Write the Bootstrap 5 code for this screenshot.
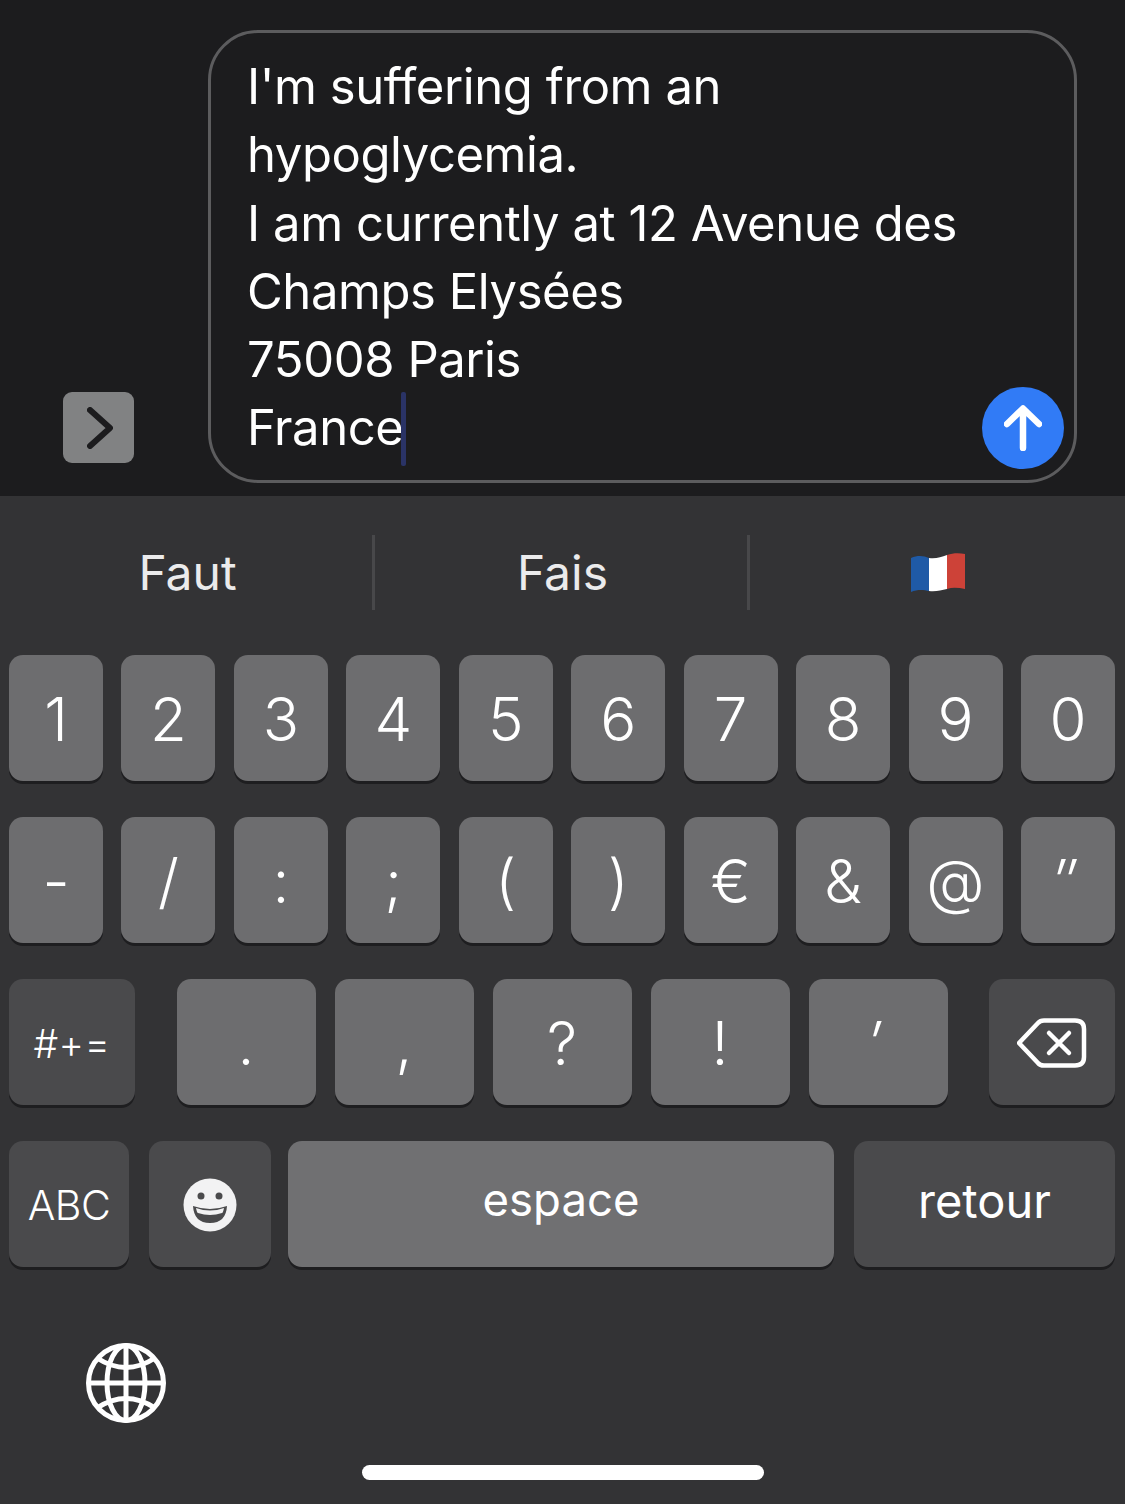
<!DOCTYPE html>
<html lang="en">
<head>
    <meta charset="UTF-8">
    <meta name="viewport" content="width=device-width, initial-scale=1.0">
    <title>Message keyboard</title>
    <link href="https://cdn.jsdelivr.net/npm/bootstrap@5.3.2/dist/css/bootstrap.min.css" rel="stylesheet">
    <style>
        html, body { height: 100%; }
        body {
            background-color: #333335;
            font-family: Inter, "Liberation Sans", sans-serif;
            font-weight: 370;
            color: #fff;
            overflow: hidden;
        }
        .msg-bar {
            height: 496px;
            background-color: #1c1c1e;
            padding: 31px 49px 13px 63px;
        }
        .expand-btn {
            width: 71px;
            height: 71px;
            margin-bottom: 20px;
            margin-right: 74px;
            padding-left: 3px;
            background-color: #818283;
            border-radius: 9px;
        }
        .msg-box {
            position: relative;
            width: 869px;
            height: 453px;
            border: 3px solid #5c5c5e;
            border-radius: 50px;
            padding: 20px 0 0 36px;
            font-size: 49px;
            line-height: 68.3px;
            letter-spacing: -0.43px;
            white-space: nowrap;
        }
        .text-caret {
            display: inline-block;
            width: 5px;
            height: 74px;
            margin: -4px 0 -4px -2px;
            vertical-align: -17px;
            background-color: #2a3366;
            border-radius: 2px;
        }
        .send-btn {
            position: absolute;
            right: 10px;
            bottom: 11px;
            width: 82px;
            height: 82px;
            background-color: #317bf6;
        }
        .suggest-row {
            height: 159px;
            padding-top: 39px;
            font-size: 48px;
            line-height: 75px;
            color: #ebebec;
        }
        .suggest-cell {
            width: 375px;
            height: 75px;
            padding-left: 3px;
            text-align: center;
            border-right: 3px solid #48484a;
        }
        .suggest-cell:last-child { border-right: 0; padding-left: 0; }
        .kb-rows {
            padding: 0 10px 0 9px;
            gap: 36px;
        }
        .kb-key {
            height: 126px;
            border-radius: 14px;
            background-color: #6d6d6f;
            box-shadow: 0 3px 0 #1e1e20;
            font-size: 60px;
            font-weight: 320;
            line-height: 1;
            color: #fff;
            padding: 2px 0 0;
        }
        .kb-key.fn-key { background-color: #4a4a4c; }
        .kb-key.quote-key { padding-right: 8px; }
        .w-digit { width: 94px; }
        .w-punct { width: 139px; }
        .punct-group { gap: 19px; }
        .w-side { width: 126px; }
        .w-abc { width: 120px; }
        .w-emoji { width: 122px; margin-left: 20px; }
        .w-space { width: 546px; margin-left: 17px; background-color: #707072; }
        .w-return { width: 261px; margin-left: 20px; }
        .txt-small { font-size: 39px; letter-spacing: 0.5px; }
        .txt-abc { font-size: 41px; letter-spacing: -0.5px; }
        .txt-word { font-size: 45.5px; padding: 0 0 8px; font-weight: 370; }
        .w-return.txt-word { font-size: 47px; }
        .kb-bottom {
            height: 200px;
            padding: 0 0 0 86px;
        }
        .globe-icon { margin-top: 76px; }
        .home-bar {
            position: absolute;
            left: 362px;
            top: 1465px;
            width: 402px;
            height: 15px;
            background-color: #fff;
        }
    </style>
</head>
<body>
    <div class="msg-bar d-flex align-items-end">
        <div class="expand-btn d-flex align-items-center justify-content-center flex-shrink-0">
            <svg width="26" height="42" viewBox="0 0 26 42" fill="none" stroke="#1c1c1e" stroke-width="6" stroke-linecap="round" stroke-linejoin="round"><path d="M3 3 L23 21 L3 39"/></svg>
        </div>
        <div class="msg-box flex-shrink-0">I'm suffering from an<br>hypoglycemia.<br>I am currently at 12 Avenue des<br>Champs Elysées<br>75008 Paris<br>France<span class="text-caret"></span>
            <div class="send-btn rounded-circle d-flex align-items-center justify-content-center">
                <svg width="38" height="46" viewBox="0 0 38 46" fill="none" stroke="#fff" stroke-width="6.500" stroke-linecap="round" stroke-linejoin="round"><path d="M19 43 V4 M3 19 L19 3.500 L35 19"/></svg>
            </div>
        </div>
    </div>

    <div class="suggest-row d-flex">
        <div class="suggest-cell">Faut</div>
        <div class="suggest-cell">Fais</div>
        <div class="suggest-cell d-flex align-items-center justify-content-center">
            <svg width="56" height="42" viewBox="0 0 56 42">
                <path d="M1 6 C8 3 14 4 19 6 V39 C14 38 8 37 1 40 Z" fill="#1f5aa6"/>
                <path d="M19 6 C26 7 31 5 37 3 V37 C31 38 26 40 19 39 Z" fill="#fff"/>
                <path d="M37 3 C43 1 49 1 55 2 V37 C49 36 43 35 37 37 Z" fill="#cd4238"/>
            </svg>
        </div>
    </div>

    <div class="kb-rows d-flex flex-column">
        <div class="d-flex justify-content-between">
            <button class="btn kb-key w-digit">1</button>
            <button class="btn kb-key w-digit">2</button>
            <button class="btn kb-key w-digit">3</button>
            <button class="btn kb-key w-digit">4</button>
            <button class="btn kb-key w-digit">5</button>
            <button class="btn kb-key w-digit">6</button>
            <button class="btn kb-key w-digit">7</button>
            <button class="btn kb-key w-digit">8</button>
            <button class="btn kb-key w-digit">9</button>
            <button class="btn kb-key w-digit">0</button>
        </div>
        <div class="d-flex justify-content-between">
            <button class="btn kb-key w-digit">-</button>
            <button class="btn kb-key w-digit">/</button>
            <button class="btn kb-key w-digit">:</button>
            <button class="btn kb-key w-digit">;</button>
            <button class="btn kb-key w-digit">(</button>
            <button class="btn kb-key w-digit">)</button>
            <button class="btn kb-key w-digit">€</button>
            <button class="btn kb-key w-digit">&amp;</button>
            <button class="btn kb-key w-digit">@</button>
            <button class="btn kb-key w-digit quote-key fst-italic">″</button>
        </div>
        <div class="d-flex justify-content-between">
            <button class="btn kb-key fn-key w-side txt-small">#+=</button>
            <div class="d-flex punct-group mx-auto">
                <button class="btn kb-key w-punct">.</button>
                <button class="btn kb-key w-punct">,</button>
                <button class="btn kb-key w-punct">?</button>
                <button class="btn kb-key w-punct">!</button>
                <button class="btn kb-key w-punct quote-key fst-italic">′</button>
            </div>
            <button class="btn kb-key fn-key w-side d-flex align-items-center justify-content-center">
                <svg width="70" height="50" viewBox="0 0 70 50" fill="none" stroke="#fff" stroke-width="4.500" stroke-linecap="round" stroke-linejoin="round"><path d="M2 25 L21 5 Q23 2.500 27 2.500 H58 Q67 2.500 67 11 V39 Q67 47.500 58 47.500 H27 Q23 47.500 21 45 Z"/><path d="M32 15 L52 35 M52 15 L32 35"/></svg>
            </button>
        </div>
        <div class="d-flex">
            <button class="btn kb-key fn-key w-abc txt-abc">ABC</button>
            <button class="btn kb-key fn-key w-emoji d-flex align-items-center justify-content-center">
                <svg width="54" height="54" viewBox="0 0 54 54"><circle cx="27" cy="27" r="26.500" fill="#f2f2f3"/><circle cx="18" cy="18" r="3.500" fill="#4a4a4c"/><circle cx="36" cy="18" r="3.500" fill="#4a4a4c"/><path d="M10 28 Q27 34 44 28 Q43 45 27 45 Q11 45 10 28 Z" fill="#4a4a4c"/><path d="M13 30 Q27 35 41 30 Q40 35 39 35 Q27 39 15 35 Q14 35 13 30 Z" fill="#f2f2f3"/></svg>
            </button>
            <button class="btn kb-key w-space txt-word">espace</button>
            <button class="btn kb-key fn-key w-return txt-word">retour</button>
        </div>
    </div>

    <div class="kb-bottom">
        <svg class="globe-icon" width="80" height="80" viewBox="0 0 80 80" fill="none" stroke="#fff" stroke-width="5">
            <circle cx="40" cy="40" r="37.500"/>
            <ellipse cx="40" cy="40" rx="19" ry="37.500"/>
            <path d="M40 2.500 V77.500 M2.500 40 H77.500"/>
            <path d="M11 15 Q40 34 69 15 M11 65 Q40 46 69 65"/>
        </svg>
    </div>
    <div class="home-bar rounded-pill"></div>

    <script src="https://cdn.jsdelivr.net/npm/bootstrap@5.3.2/dist/js/bootstrap.bundle.min.js"></script>
</body>
</html>
